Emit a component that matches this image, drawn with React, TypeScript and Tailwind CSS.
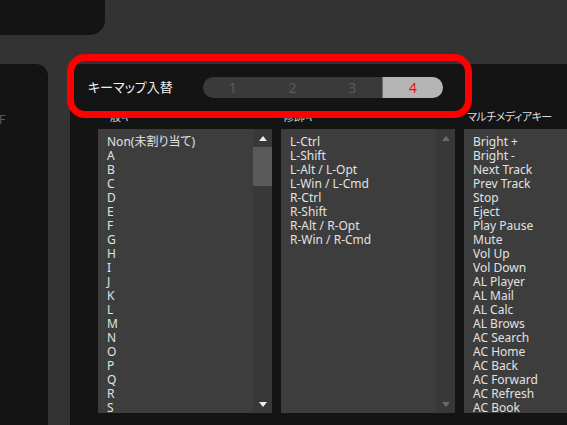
import React, { FC } from "react";

const general = [
  "Non(未割り当て)", "A", "B", "C", "D", "E", "F", "G", "H", "I", "J", "K",
  "L", "M", "N", "O", "P", "Q", "R", "S",
];

const modifiers = [
  "L-Ctrl", "L-Shift", "L-Alt / L-Opt", "L-Win / L-Cmd",
  "R-Ctrl", "R-Shift", "R-Alt / R-Opt", "R-Win / R-Cmd",
];

const media = [
  "Bright +", "Bright -", "Next Track", "Prev Track", "Stop", "Eject",
  "Play Pause", "Mute", "Vol Up", "Vol Down", "AL Player", "AL Mail",
  "AL Calc", "AL Brows", "AC Search", "AC Home", "AC Back", "AC Forward",
  "AC Refresh", "AC Book",
];

const Arrow: FC<{ down?: boolean; color: string }> = ({ down, color }) => (
  <svg width="8" height="5" viewBox="0 0 8 5">
    <path d={down ? "M0 0 L8 0 L4 5 Z" : "M0 5 L8 5 L4 0 Z"} fill={color} />
  </svg>
);

const ListBox: FC<{ items: string[]; scroll?: "active" | "disabled" | "none" }> = ({
  items,
  scroll = "none",
}) => (
  <div className="w-[174px] h-[284px] bg-[#3d3d3d] flex shrink-0">
    <div className="flex-1 pl-[9px] pt-[6px] text-[12px] leading-[14px] text-[#e2e2e2] overflow-hidden [font-feature-settings:'palt']">
      {items.map((it) => (
        <div key={it} className="whitespace-nowrap">
          {it}
        </div>
      ))}
    </div>
    {scroll !== "none" && (
      <div className="w-[19px] bg-[#383838] flex flex-col">
        <div className="h-[18px] flex items-center justify-center">
          <Arrow color={scroll === "active" ? "#f0f0f0" : "#6a6a6a"} />
        </div>
        {scroll === "active" ? (
          <div className="h-[39px] bg-[#5a5a5a]" />
        ) : null}
        <div className="flex-1" />
        <div className="h-[18px] flex items-center justify-center">
          <Arrow down color={scroll === "active" ? "#f0f0f0" : "#6a6a6a"} />
        </div>
      </div>
    )}
  </div>
);

const segments = ["1", "2", "3", "4"];

export default function App() {
  return (
    <div className="relative w-[567px] h-[425px] overflow-hidden bg-[#333333] flex flex-col font-['Noto_Sans','Noto_Sans_CJK_JP',sans-serif]">
      <div className="w-[105px] h-[35px] shrink-0 bg-[#141414] rounded-br-[15px]" />

      <div className="flex flex-1 mt-[29px] min-h-0">
        <div className="w-[48px] shrink-0 bg-[#141414] rounded-tr-[12px] pt-[49px] overflow-hidden">
          <div className="-ml-[1px] text-[12px] leading-[14px] text-[#5c5c5c]">F</div>
        </div>

        <div className="flex-1 min-w-0 ml-[22px] bg-[#141414] rounded-tl-[10px] flex flex-col overflow-hidden">
          <div className="flex items-center pt-[13px] pl-[18px]">
            <div className="w-[115px] shrink-0 text-[13px] leading-[21px] text-[#f2f2f2] [font-feature-settings:'palt']">
              キーマップ入替
            </div>
            <div className="flex h-[21px] w-[240px] shrink-0 rounded-full bg-[#3a3a3a] overflow-hidden">
              {segments.map((s) => (
                <div
                  key={s}
                  className={
                    s === "4"
                      ? "w-[61px] flex items-center justify-center bg-[#b5b5b5] border-l border-[#6e6e6e] text-[14px] text-[#e8140f]"
                      : "w-[60px] flex items-center justify-center text-[14px] text-[#5a5a5a]"
                  }
                >
                  {s}
                </div>
              ))}
            </div>
          </div>

          <div className="flex gap-[9px] pl-[28px] mt-[12px] text-[11px] leading-[14px] text-[#dcdcdc] [font-feature-settings:'palt']">
            <div className="w-[174px] shrink-0 pl-[1px]">一般キー</div>
            <div className="w-[174px] shrink-0 pl-[2px]">修飾キー</div>
            <div className="w-[174px] shrink-0 pl-[3px] tracking-[-0.5px]">マルチメディアキー</div>
          </div>

          <div className="flex gap-[9px] pl-[28px] mt-[5px]">
            <ListBox items={general} scroll="active" />
            <ListBox items={modifiers} scroll="disabled" />
            <ListBox items={media} />
          </div>
        </div>
      </div>

      <div className="absolute left-[67px] top-[54px] w-[405px] h-[64px] border-[7px] border-[#ff0000] rounded-[18px] pointer-events-none" />
    </div>
  );
}
